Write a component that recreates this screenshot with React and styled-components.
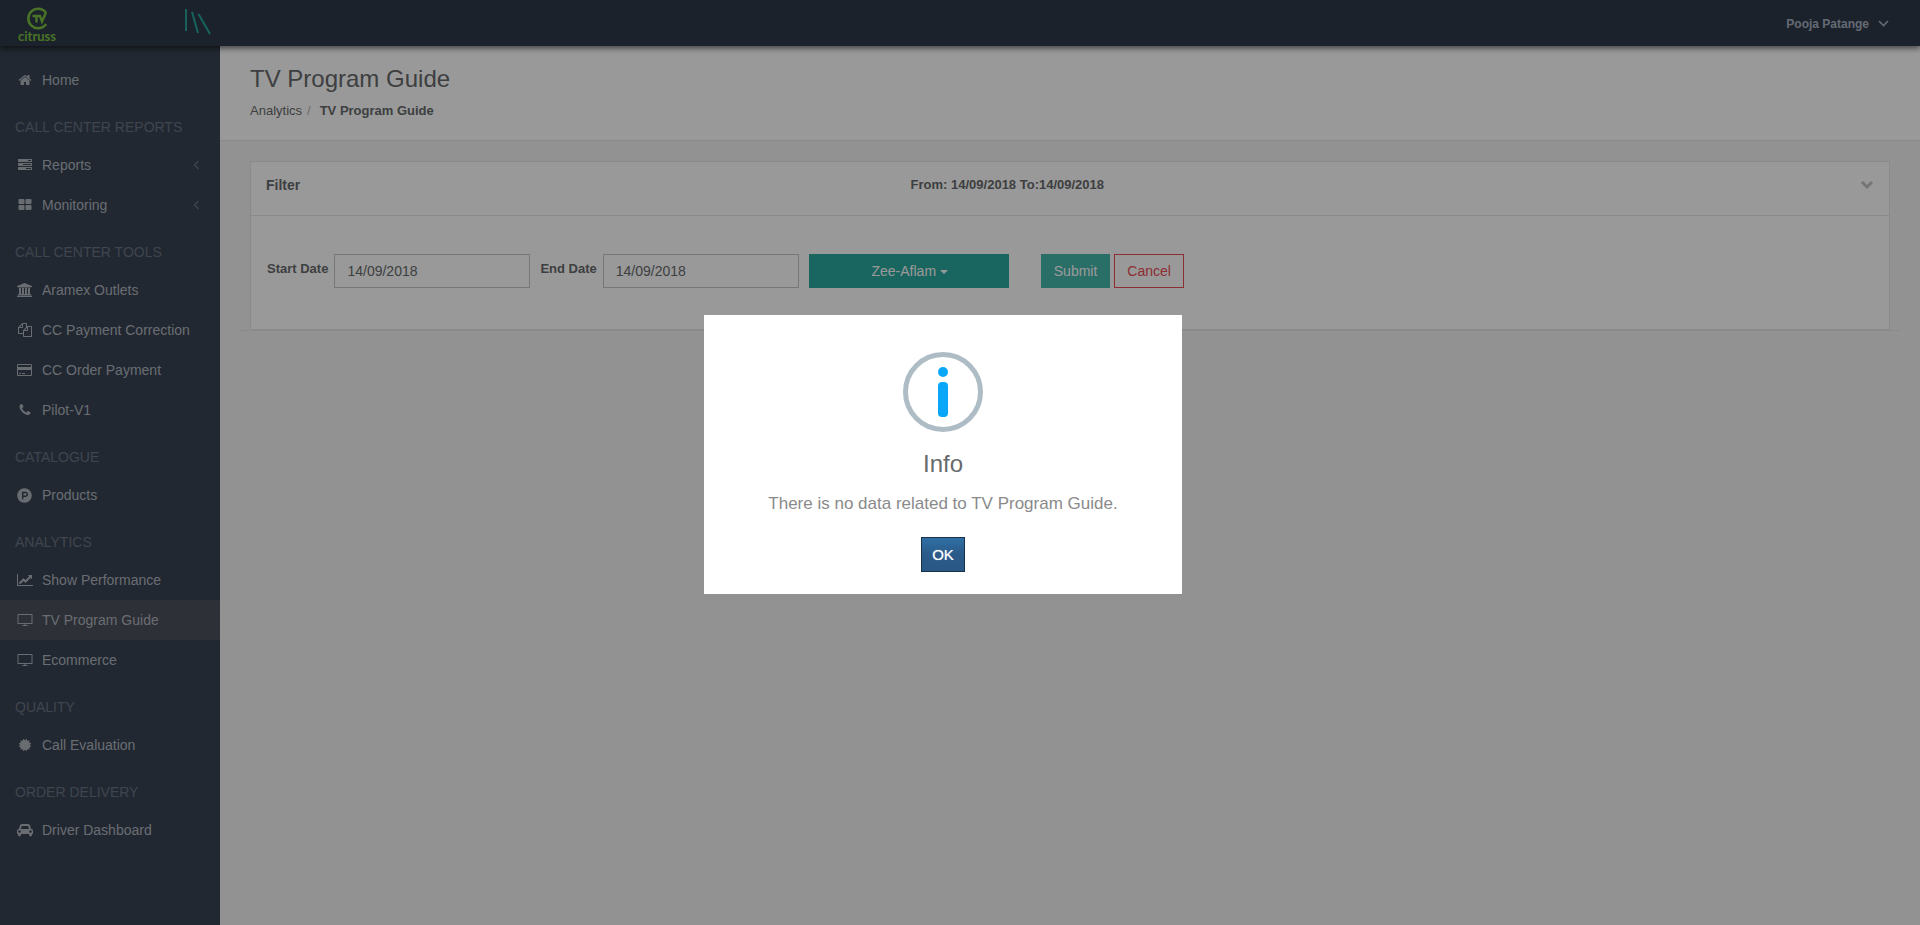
import React from "react";
import styled, { createGlobalStyle } from "styled-components";
import { FaProductHunt } from "react-icons/fa";

const GlobalStyle = createGlobalStyle`
  *, *::before, *::after { box-sizing: border-box; }
  body {
    margin: 0;
    background: #f3f3f3;
    color: #676a6c;
    font-family: "Liberation Sans", Arial, sans-serif;
    font-size: 13px;
    line-height: 20px;
  }
  h1, h2, p, ul, ol { margin: 0; padding: 0; }
  ul, ol { list-style: none; }
  a { color: inherit; text-decoration: none; }
  button, input, select { font-family: inherit; border-radius: 0; }
`;

const Page = styled.div`
  display: flex;
  flex-direction: column;
  min-height: 100vh;
`;

const TopBar = styled.header`
  display: flex;
  align-items: center;
  justify-content: space-between;
  height: 46px;
  padding: 0 30px 0 17px;
  background: #2f3a48;
  box-shadow: 0 2px 6px rgba(0, 0, 0, 0.6);
  z-index: 1;
`;

const BrandArea = styled.div`
  display: flex;
  align-items: flex-start;
  justify-content: space-between;
  width: 195px;
  height: 46px;
`;

const MenuToggle = styled.button`
  padding: 8px 0;
  border: 0;
  background: none;
  line-height: 0;
`;

const UserMenu = styled.button`
  display: flex;
  align-items: center;
  gap: 8px;
  padding: 2px 0 0;
  border: 0;
  background: none;
  color: #a7b1c2;
  font-size: 12px;
  font-weight: bold;
  line-height: 20px;
`;

const Body = styled.div`
  display: flex;
  flex: 1;
`;

const Sidebar = styled.nav`
  flex: 0 0 220px;
  padding: 14px 0;
  background: #394352;
  font-size: 14px;
`;

const SectionTitle = styled.h2`
  padding: 17px 15px 8px;
  color: #6a7484;
  font-size: 14px;
  font-weight: normal;
  line-height: 20px;
  text-transform: uppercase;
`;

const NavLink = styled.a`
  display: flex;
  align-items: center;
  gap: 8px;
  height: 40px;
  padding: 0 20px 0 15px;
  background: ${(p) => (p.$active ? "#4b505a" : "transparent")};
  color: #b0b6bf;
`;

const IconSlot = styled.span`
  display: flex;
  justify-content: center;
  flex: 0 0 19px;
`;

const NavLabel = styled.span`
  flex: 1;
`;

const Main = styled.main`
  flex: 1;
  min-width: 0;
`;

const PageHeading = styled.div`
  padding: 19px 30px;
  border-bottom: 1px solid #e7e7e7;
  background: #fff;
`;

const PageTitle = styled.h1`
  font-size: 24px;
  font-weight: normal;
  line-height: 28px;
`;

const Breadcrumb = styled.ol`
  display: flex;
  gap: 5px;
  padding: 8px 0 0;

  li + li::before {
    content: "/";
    padding-right: 9px;
    color: #b4b4b4;
    font-weight: normal;
  }
`;

const Crumb = styled.li`
  font-weight: ${(p) => (p.$current ? "bold" : "normal")};
`;

const Content = styled.div`
  margin: 20px 20px 0;
  padding: 0 10px;
  border-bottom: 1px solid #e7e7e7;
`;

const Panel = styled.section`
  border: 1px solid #e7e7e7;
  background: #fff;
`;

const PanelHeader = styled.div`
  display: grid;
  grid-template-columns: 2fr 3fr auto;
  align-items: center;
  height: 54px;
  padding: 0 15px 8px;
  border-bottom: 1px solid #e7e7e7;
`;

const PanelTitle = styled.h2`
  font-size: 14px;
  line-height: 20px;
`;

const DateRange = styled.span`
  padding-left: 7px;
  font-weight: bold;
`;

const CollapseButton = styled.button`
  justify-self: end;
  padding: 0;
  border: 0;
  background: none;
  line-height: 0;
`;

const FilterForm = styled.form`
  display: flex;
  align-items: center;
  padding: 38px 16px 41px;
`;

const Field = styled.label`
  display: flex;
  align-items: center;
  gap: 6px;
  margin-right: 10px;
  font-weight: bold;
`;

const FieldText = styled.span`
  padding-bottom: 4px;
`;

const DateInput = styled.input`
  width: 196px;
  height: 34px;
  padding: 0 12px;
  border: 1px solid #c6c6c6;
  background: #fff;
  color: #676a6c;
  font-size: 14px;
`;

const SelectWrap = styled.div`
  position: relative;
  width: 200px;
  margin-right: 32px;
`;

const ChannelSelect = styled.select`
  display: block;
  width: 100%;
  height: 34px;
  padding: 0 10px 0 0;
  border: 0;
  appearance: none;
  background: #2ba99e;
  color: #fff;
  font-size: 14px;
  text-align: center;
  text-align-last: center;
`;

const Caret = styled.span`
  position: absolute;
  top: 16px;
  left: calc(50% + 31px);
  border: 4px solid transparent;
  border-top-color: #fff;
  border-bottom: 0;
  pointer-events: none;
`;

const FormButton = styled.button`
  height: 34px;
  margin-right: 4px;
  padding: 0 12px;
  border: 1px solid ${(p) => (p.$outline ? "#ed4b57" : "#46b7ad")};
  background: ${(p) => (p.$outline ? "#fff" : "#46b7ad")};
  color: ${(p) => (p.$outline ? "#ed4b57" : "#fff")};
  font-size: 14px;
`;

const Overlay = styled.div`
  position: fixed;
  inset: 0;
  z-index: 10;
  background: rgba(0, 0, 0, 0.4);
`;

const Dialog = styled.div`
  position: absolute;
  top: 50%;
  top: round(down, 50%, 1px);
  left: 50%;
  display: flex;
  flex-direction: column;
  align-items: center;
  width: 478px;
  margin: -147px 0 0 -256px;
  padding: 37px 17px 22px;
  background: #fff;
`;

const DialogTitle = styled.h2`
  margin-top: 16px;
  color: #676a6c;
  font-size: 24px;
  font-weight: normal;
  line-height: 32px;
`;

const DialogText = styled.p`
  margin-top: 12px;
  color: #8a8a8a;
  font-size: 17px;
  line-height: 24px;
`;

const DialogButton = styled.button`
  width: 44px;
  height: 35px;
  margin-top: 21px;
  padding: 0;
  border: 1px solid #1a3249;
  background: linear-gradient(#306fa5, #2a5a89 50%, #2a5885);
  color: #fff;
  font-size: 15px;
  text-shadow: 0 0 1px rgba(255, 255, 255, 0.6);
`;

const ICONS = {
  home: [1792, "M1472 992v480q0 26-19 45t-45 19h-384v-384h-256v384h-384q-26 0-45-19t-19-45v-480q0-1 .5-3t.5-3l575-474 575 474q1 2 1 6zm223-69l-62 74q-8 9-21 11h-3q-13 0-21-7l-692-577-692 577q-12 8-24 7-13-2-21-11l-62-74q-8-10-7-23.5t11-21.5l719-599q32-26 76-26t76 26l244 204v-195q0-14 9-23t23-9h192q14 0 23 9t9 23v408l219 182q10 8 11 21.5t-7 23.5z"],
  tasks: [1792, "M1024 1408h640v-128h-640v128zm-384-512h1024v-128h-1024v128zm640-512h384v-128h-384v128zm512 832v256q0 26-19 45t-45 19h-1664q-26 0-45-19t-19-45v-256q0-26 19-45t45-19h1664q26 0 45 19t19 45zm0-512v256q0 26-19 45t-45 19h-1664q-26 0-45-19t-19-45v-256q0-26 19-45t45-19h1664q26 0 45 19t19 45zm0-512v256q0 26-19 45t-45 19h-1664q-26 0-45-19t-19-45v-256q0-26 19-45t45-19h1664q26 0 45 19t19 45z"],
  grid: [1792, "M832 1024v384q0 52-38 90t-90 38h-512q-52 0-90-38t-38-90v-384q0-52 38-90t90-38h512q52 0 90 38t38 90zm0-768v384q0 52-38 90t-90 38h-512q-52 0-90-38t-38-90v-384q0-52 38-90t90-38h512q52 0 90 38t38 90zm896 768v384q0 52-38 90t-90 38h-512q-52 0-90-38t-38-90v-384q0-52 38-90t90-38h512q52 0 90 38t38 90zm0-768v384q0 52-38 90t-90 38h-512q-52 0-90-38t-38-90v-384q0-52 38-90t90-38h512q52 0 90 38t38 90z"],
  bank: [1920, "M960 0l960 384v128h-128q0 26-20.5 45t-48.5 19h-1526q-28 0-48.5-19t-20.5-45h-128v-128zm-704 640h256v768h128v-768h256v768h128v-768h256v768h128v-768h256v768h59q28 0 48.5 19t20.5 45v64h-1664v-64q0-26 20.5-45t48.5-19h59v-768zm1595 960q28 0 48.5 19t20.5 45v128h-1920v-128q0-26 20.5-45t48.5-19h1782z"],
  files: [1792, "M1696 384q40 0 68 28t28 68v1216q0 40-28 68t-68 28h-960q-40 0-68-28t-28-68v-288h-544q-40 0-68-28t-28-68v-672q0-40 20-88t48-76l408-408q28-28 76-48t88-20h416q40 0 68 28t28 68v328q68-40 128-40h416zm-544 213l-299 299h299v-299zm-640-384l-299 299h299v-299zm196 647l316-316v-416h-384v416q0 40-28 68t-68 28h-416v640h512v-256q0-40 20-88t48-76zm956 804v-1152h-384v416q0 40-28 68t-68 28h-416v640h896z"],
  card: [1920, "M1760 128q66 0 113 47t47 113v1216q0 66-47 113t-113 47h-1600q-66 0-113-47t-47-113v-1216q0-66 47-113t113-47h1600zm-1600 128q-13 0-22.5 9.5t-9.5 22.5v224h1664v-224q0-13-9.5-22.5t-22.5-9.5h-1600zm1600 1280q13 0 22.5-9.5t9.5-22.5v-608h-1664v608q0 13 9.5 22.5t22.5 9.5h1600zm-1504-128v-128h256v128h-256zm384 0v-128h384v128h-384z"],
  phone: [1792, "M1600 1240q0 27-10 70.5t-21 68.5q-21 50-122 106-94 51-186 51-27 0-53-3.5t-57.5-12.5-47-14.5-55.5-20.5-49-18q-98-35-175-83-127-79-264-216t-216-264q-48-77-83-175-3-9-18-49t-20.5-55.5-14.5-47-12.5-57.5-3.5-53q0-92 51-186 56-101 106-122 25-11 68.5-21t70.5-10q14 0 21 3 18 6 53 76 11 19 30 54t35 63.5 31 53.5q3 4 17.5 25t21.5 35.5 7 28.5q0 20-28.5 50t-62 55-62 53-28.5 46q0 9 5 22.5t8.5 20.5 14 24 11.5 19q76 137 174 235t235 174q2 1 19 11.5t24 14 20.5 8.5 22.5 5q18 0 46-28.5t53-62 55-62 50-28.5q14 0 28.5 7t35.5 21.5 25 17.5q25 15 53.5 31t63.5 35 54 30q70 35 76 53 3 7 3 21z"],
  chart: [2048, "M2048 1536v128h-2048v-1536h128v1408h1920zm-128-1248v435q0 21-19.5 29.5t-35.5-7.5l-121-121-633 633q-10 10-23 10t-23-10l-233-233-416 416-192-192 585-585q10-10 23-10t23 10l233 233 464-464-121-121q-16-16-7.5-35.5t29.5-19.5h435q14 0 23 9t9 23z"],
  tv: [2048, "M160 128h1728q96 0 96 96v1088q0 96-96 96h-800v128h256v128h-640v-128h256v-128h-800q-96 0-96-96v-1088q0-96 96-96zm32 128v1024h1664v-1024z"],
  certificate: [1792, "M1504 896l138 135q30 28 20 70-12 41-52 51l-188 48 53 186q12 41-19 70-29 31-70 19l-186-53-48 188q-10 40-51 52-12 2-19 2-31 0-51-22l-135-138-135 138q-28 30-70 20-41-11-51-52l-48-188-186 53q-41 12-70-19-31-29-19-70l53-186-188-48q-40-10-52-51-10-42 20-70l138-135-138-135q-30-28-20-70 12-41 52-51l188-48-53-186q-12-41 19-70 29-31 70-19l186 53 48-188q10-41 51-51 41-12 70 19l135 139 135-139q29-30 70-19 41 10 51 51l48 188 186-53q41-12 70 19 31 29 19 70l-53 186 188 48q40 10 52 51 10 42-20 70z"],
  car: [2048, "M480 1088q0-66-47-113t-113-47-113 47-47 113 47 113 113 47 113-47 47-113zm36-320h1016l-89-357q-2-8-14-17.5t-21-9.5h-768q-9 0-21 9.5t-14 17.5zm1372 320q0-66-47-113t-113-47-113 47-47 113 47 113 113 47 113-47 47-113zm160-96v384q0 14-9 23t-23 9h-96v128q0 80-56 136t-136 56-136-56-56-136v-128h-1024v128q0 80-56 136t-136 56-136-56-56-136v-128h-96q-14 0-23-9t-9-23v-384q0-93 65.5-158.5t158.5-65.5h28l105-419q23-94 104-157.5t179-63.5h768q98 0 179 63.5t104 157.5l105 419h28q93 0 158.5 65.5t65.5 158.5z"],
};

const NavIcon = ({ name }) => {
  if (name === "product") return <FaProductHunt size={15} aria-hidden="true" />;
  const [width, path] = ICONS[name];
  return (
    <svg width={width / 128} height="14" viewBox={`0 0 ${width} 1792`} fill="currentColor" fillRule="evenodd" aria-hidden="true">
      <path d={path} />
    </svg>
  );
};

const Logo = () => (
  <svg width="42" height="44" viewBox="0 0 42 44" role="img" aria-label="Citruss TV">
    <path d="M28.500 12A9.800 9.800 0 1 0 28.500 25" fill="none" stroke="#7ac143" strokeWidth="2.6" strokeLinecap="round" />
    <path d="M15.500 16H23L25 21.500L29 12.500M19.500 16V22.500" fill="none" stroke="#7ac143" strokeWidth="2.4" />
    <text x="1" y="41" fill="#7ac143" fontSize="13" fontWeight="bold" fontFamily="Lato, 'Liberation Sans', sans-serif">citruss</text>
  </svg>
);

const SECTIONS = [
  { items: [["home", "Home"]] },
  { title: "Call Center Reports", items: [["tasks", "Reports", true], ["grid", "Monitoring", true]] },
  {
    title: "Call Center Tools",
    items: [["bank", "Aramex Outlets"], ["files", "CC Payment Correction"], ["card", "CC Order Payment"], ["phone", "Pilot-V1"]],
  },
  { title: "Catalogue", items: [["product", "Products"]] },
  { title: "Analytics", items: [["chart", "Show Performance"], ["tv", "TV Program Guide"], ["tv", "Ecommerce"]] },
  { title: "Quality", items: [["certificate", "Call Evaluation"]] },
  { title: "Order Delivery", items: [["car", "Driver Dashboard"]] },
];

export default function App() {
  return (
    <>
      <GlobalStyle />
      <Page>
        <TopBar>
          <BrandArea>
            <a href="#home"><Logo /></a>
            <MenuToggle type="button" aria-label="Toggle menu">
              <svg width="28" height="28" viewBox="0 0 28 28" fill="none" stroke="#26a69a" strokeWidth="2">
                <path d="M2 1V23M8 4L14 25M14.500 6L26 26" />
              </svg>
            </MenuToggle>
          </BrandArea>
          <UserMenu type="button">
            Pooja Patange
            <svg width="13" height="10" viewBox="0 0 13 10" fill="none" stroke="currentColor" strokeWidth="1.6">
              <path d="M2 2L6.500 6.500L11 2" />
            </svg>
          </UserMenu>
        </TopBar>
        <Body>
          <Sidebar>
            {SECTIONS.map((section) => (
              <React.Fragment key={section.title || "top"}>
                {section.title && <SectionTitle>{section.title}</SectionTitle>}
                <ul>
                  {section.items.map(([icon, label, hasMenu]) => (
                    <li key={label}>
                      <NavLink href="#nav" $active={label === "TV Program Guide"}>
                        <IconSlot><NavIcon name={icon} /></IconSlot>
                        <NavLabel>{label}</NavLabel>
                        {hasMenu && (
                          <svg width="7" height="10" viewBox="0 0 7 10" fill="none" stroke="#6a7484" strokeWidth="1.3">
                            <path d="M5.500 1L1.500 5L5.500 9" />
                          </svg>
                        )}
                      </NavLink>
                    </li>
                  ))}
                </ul>
              </React.Fragment>
            ))}
          </Sidebar>
          <Main>
            <PageHeading>
              <PageTitle>TV Program Guide</PageTitle>
              <Breadcrumb>
                <Crumb><a href="#analytics">Analytics</a></Crumb>
                <Crumb $current>TV Program Guide</Crumb>
              </Breadcrumb>
            </PageHeading>
            <Content>
              <Panel>
                <PanelHeader>
                  <PanelTitle>Filter</PanelTitle>
                  <DateRange>From: 14/09/2018 To:14/09/2018</DateRange>
                  <CollapseButton type="button" aria-label="Collapse filter">
                    <svg width="14" height="10" viewBox="0 0 14 10" fill="none" stroke="#c4c4c4" strokeWidth="3">
                      <path d="M2 2L7 7L12 2" />
                    </svg>
                  </CollapseButton>
                </PanelHeader>
                <FilterForm onSubmit={(e) => e.preventDefault()}>
                  <Field>
                    <FieldText>Start Date</FieldText>
                    <DateInput type="text" defaultValue="14/09/2018" />
                  </Field>
                  <Field>
                    <FieldText>End Date</FieldText>
                    <DateInput type="text" defaultValue="14/09/2018" />
                  </Field>
                  <SelectWrap>
                    <ChannelSelect aria-label="Channel" defaultValue="Zee-Aflam">
                      <option>Zee-Aflam</option>
                    </ChannelSelect>
                    <Caret />
                  </SelectWrap>
                  <FormButton type="submit">Submit</FormButton>
                  <FormButton type="button" $outline>Cancel</FormButton>
                </FilterForm>
              </Panel>
            </Content>
          </Main>
        </Body>
      </Page>
      <Overlay>
        <Dialog role="dialog" aria-modal="true" aria-labelledby="dialog-title">
          <svg width="80" height="80" viewBox="0 0 80 80" aria-hidden="true">
            <circle cx="40" cy="40" r="37.500" fill="none" stroke="#aebdc5" strokeWidth="5" />
            <circle cx="40" cy="20" r="5" fill="#0aa6f7" />
            <rect x="35" y="30" width="10" height="35" rx="4" fill="#0aa6f7" />
          </svg>
          <DialogTitle id="dialog-title">Info</DialogTitle>
          <DialogText>There is no data related to TV Program Guide.</DialogText>
          <DialogButton type="button">OK</DialogButton>
        </Dialog>
      </Overlay>
    </>
  );
}
